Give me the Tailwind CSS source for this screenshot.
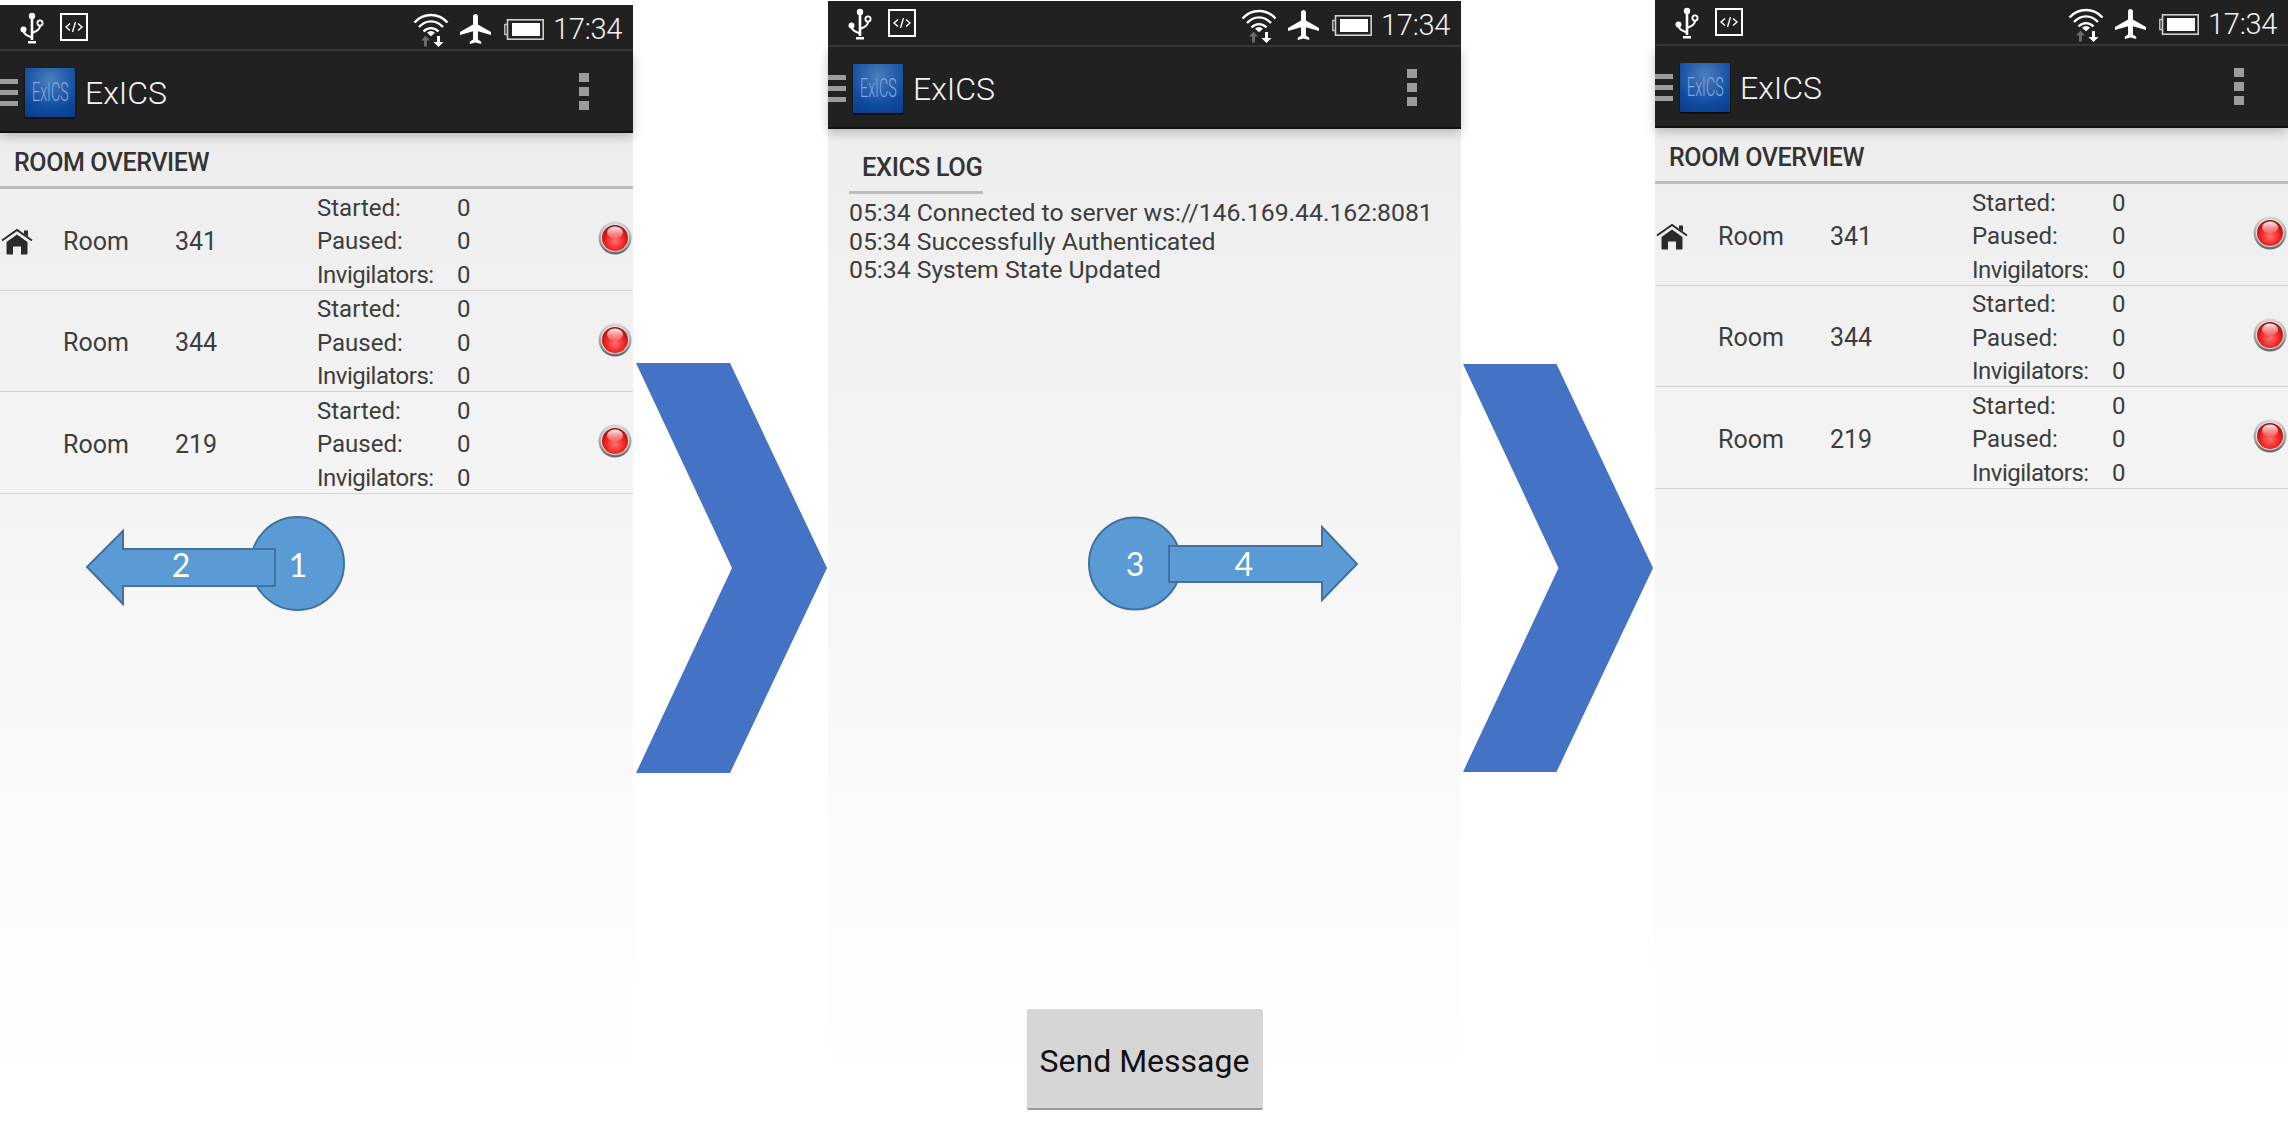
<!DOCTYPE html>
<html lang="en">
<head>
<meta charset="utf-8">
<title>ExICS</title>
<script src="https://cdn.jsdelivr.net/npm/@tailwindcss/browser@4"></script>
</head>
<body class="bg-white">
<svg class="absolute h-0 w-0" xmlns="http://www.w3.org/2000/svg">
  <defs>
    <radialGradient id="ledRed" cx="50%" cy="62%" r="62%">
      <stop offset="0%" stop-color="#ff7272"/><stop offset="60%" stop-color="#f02020"/><stop offset="100%" stop-color="#9c0f0f"/>
    </radialGradient>
    <linearGradient id="ledRing" x1="0" y1="0" x2="0" y2="1">
      <stop offset="0%" stop-color="#d8d8d8"/><stop offset="60%" stop-color="#a0a0a0"/><stop offset="100%" stop-color="#666"/>
    </linearGradient>
    <linearGradient id="ledShine" x1="0" y1="0" x2="0" y2="1">
      <stop offset="0%" stop-color="#fff" stop-opacity=".95"/><stop offset="100%" stop-color="#fff" stop-opacity=".1"/>
    </linearGradient>
    <symbol id="led" viewBox="0 0 34 34">
      <circle cx="17" cy="17" r="16.5" fill="url(#ledRing)"/>
      <circle cx="17" cy="17" r="14" fill="#e4e4e4"/>
      <circle cx="17" cy="17" r="13" fill="url(#ledRed)"/>
      <ellipse cx="17" cy="11.5" rx="8" ry="6" fill="url(#ledShine)"/>
    </symbol>
    <symbol id="house" viewBox="0 0 32 27">
      <path d="M1 12.5 16 2l15 10.5" fill="none" stroke="#2b2b2b" stroke-width="2"/>
      <path d="M23 2.5h4v6l-4-2.800z" fill="#2b2b2b"/>
      <path d="M5.500 14 16 6.500 26.500 14v11.500a1 1 0 0 1-1 1H20V18.500h-8v8H6.500a1 1 0 0 1-1-1z" fill="#2b2b2b"/>
    </symbol>
    <symbol id="usb" viewBox="0 0 26 32">
      <circle cx="12" cy="4" r="3.200" fill="#fff"/>
      <path d="M12 4v24" stroke="#fff" stroke-width="2.600"/>
      <path d="M8 29h8v2.500H8z" fill="#fff"/>
      <circle cx="3.500" cy="17.500" r="3" fill="#fff"/>
      <path d="M3.500 18c0 4 3 5.500 8.500 7.500" fill="none" stroke="#fff" stroke-width="2.200"/>
      <circle cx="20" cy="11" r="2.600" fill="none" stroke="#fff" stroke-width="1.800"/>
      <path d="M20 13.500c0 4-3 5.500-8 7.500" fill="none" stroke="#fff" stroke-width="2.200"/>
    </symbol>
    <symbol id="code" viewBox="0 0 28 28">
      <rect x="1" y="1" width="26" height="26" fill="none" stroke="#fff" stroke-width="2"/>
      <path d="M10 10.500 6 14l4 3.500M18 10.500l4 3.500-4 3.500M15.500 9l-3 10" fill="none" stroke="#fff" stroke-width="1.400"/>
    </symbol>
    <symbol id="wifi" viewBox="0 0 36 35">
      <path d="M1.500 10.500C10.500 .5 25.500 .5 34.500 10.500" fill="none" stroke="#fff" stroke-width="2.400"/>
      <path d="M6 15c7-7.500 17-7.500 24 0" fill="none" stroke="#fff" stroke-width="2.400"/>
      <path d="M10.500 19.500c4.500-4.500 10.500-4.500 15 0" fill="none" stroke="#fff" stroke-width="2.400"/>
      <path d="M18 19a6 6 0 0 0-4 1.800l4 3.500 4-3.500a6 6 0 0 0-4-1.800z" fill="#fff"/>
      <path d="M12.500 23.500 8 28.500h3V34.500h3V28.500h3z" fill="#6a6a6a"/>
      <path d="M24 24v6h-3.500l5 5 5-5H27v-6z" fill="#fff"/>
    </symbol>
    <symbol id="plane" viewBox="2 2 19 20" preserveAspectRatio="none">
      <path d="M21 16v-2l-8-5V3.500c0-.83-.67-1.500-1.500-1.500S10 2.670 10 3.500V9l-8 5v2l8-2.500V19l-2 1.500V22l3.500-1 3.500 1v-1.500L13 19v-5.500l8 2.500z" fill="#fff"/>
    </symbol>
    <symbol id="battery" viewBox="0 0 40 21">
      <path d="M3.500 5.500H.8v10h2.700" fill="none" stroke="#bdbdbd" stroke-width="1.500"/>
      <rect x="3.500" y=".8" width="35.700" height="19.400" fill="none" stroke="#cfcfcf" stroke-width="1.600"/>
      <rect x="8" y="4" width="28" height="13" fill="#fff"/>
    </symbol>
  </defs>
</svg>

<div class="flex h-[1130px] w-[2288px] overflow-hidden font-[Roboto,sans-serif]">

  <!-- Phone 1 -->
  <section class="relative mt-[5px] flex w-[633px] shrink-0 flex-col bg-linear-to-b from-[#ebebeb] to-white to-95%">
    <div class="flex h-[44px] items-center bg-[#212121] text-white">
      <svg class="ml-[20px] mt-[2px] h-[32px] w-[26px]"><use href="#usb"/></svg>
      <svg class="ml-[14px] mt-[-1px] h-[28px] w-[28px]"><use href="#code"/></svg>
      <svg class="ml-auto mt-[4px] h-[35px] w-[36px]"><use href="#wifi"/></svg>
      <svg class="ml-[11px] mt-[4px] h-[30px] w-[31px]"><use href="#plane"/></svg>
      <svg class="ml-[13px] mt-[4px] h-[21px] w-[40px]"><use href="#battery"/></svg>
      <span class="ml-[9px] mr-[11px] mt-[4px] text-[29px] font-light leading-none tracking-[-0.3px] text-[#f2f2f2]">17:34</span>
    </div>
    <div class="h-[2px] bg-[#383838]"></div>
    <div class="relative z-10 flex h-[82px] items-center border-b-2 border-[#111] bg-[#212121] shadow-[0_4px_10px_rgba(0,0,0,0.22)]">
      <div class="mt-[2px] flex w-[18px] flex-col gap-[6px]"><i class="h-[5px] bg-[#9c9c9c]"></i><i class="h-[5px] bg-[#9c9c9c]"></i><i class="h-[5px] bg-[#9c9c9c]"></i></div>
      <div class="ml-[7px] mt-[2px] flex h-[49px] w-[50px] items-center justify-center overflow-hidden rounded-[1px] bg-[radial-gradient(circle_at_50%_25%,#4c7dbf,#0f4ba0_65%,#0b3d8a)] shadow-[0_1px_2px_#000]"><span class="scale-x-55 text-[26px] font-light text-[#86a9dc]">ExICS</span></div>
      <span class="ml-[10px] mt-[3px] text-[32px] font-light text-[#f2f2f2]">ExICS</span>
      <div class="ml-auto mr-[44px] flex w-[10px] flex-col gap-[5px]"><i class="h-[9px] bg-[#9c9c9c]"></i><i class="h-[9px] bg-[#9c9c9c]"></i><i class="h-[9px] bg-[#9c9c9c]"></i></div>
    </div>
    <h2 class="flex h-[56px] items-center border-b-[3px] border-[#bcbcbc] pl-[14px] pt-[6px] text-[25px] font-medium tracking-[-0.4px] text-[#333]">ROOM OVERVIEW</h2>
    <div class="text-[25px] text-[#3d3d3d]">
      <div class="flex h-[101.5px] items-center border-b border-[#d4d4d4] pt-[4px]">
        <svg class="ml-px mr-[30px] h-[27px] w-[32px]"><use href="#house"/></svg>
        <span class="w-[112px]">Room</span><span class="w-[142px]">341</span>
        <div class="mt-[1px] grid grid-cols-[140px_auto] text-[24px] leading-[33.5px]"><span>Started:</span><span>0</span><span>Paused:</span><span>0</span><span class="tracking-[-0.5px]">Invigilators:</span><span>0</span></div>
        <svg class="mb-[6px] ml-auto mr-px h-[34px] w-[34px]"><use href="#led"/></svg>
      </div>
      <div class="flex h-[101.5px] items-center border-b border-[#d4d4d4] pt-[4px]">
        <span class="ml-[63px] w-[112px]">Room</span><span class="w-[142px]">344</span>
        <div class="mt-[1px] grid grid-cols-[140px_auto] text-[24px] leading-[33.5px]"><span>Started:</span><span>0</span><span>Paused:</span><span>0</span><span class="tracking-[-0.5px]">Invigilators:</span><span>0</span></div>
        <svg class="mb-[6px] ml-auto mr-px h-[34px] w-[34px]"><use href="#led"/></svg>
      </div>
      <div class="flex h-[101.5px] items-center border-b border-[#d4d4d4] pt-[4px]">
        <span class="ml-[63px] w-[112px]">Room</span><span class="w-[142px]">219</span>
        <div class="mt-[1px] grid grid-cols-[140px_auto] text-[24px] leading-[33.5px]"><span>Started:</span><span>0</span><span>Paused:</span><span>0</span><span class="tracking-[-0.5px]">Invigilators:</span><span>0</span></div>
        <svg class="mb-[6px] ml-auto mr-px h-[34px] w-[34px]"><use href="#led"/></svg>
      </div>
    </div>
    <svg class="absolute left-[80px] top-[505px] h-[110px] w-[275px]" viewBox="80 510 275 110">
      <circle cx="297.500" cy="563.500" r="46.500" fill="#5b9bd5" stroke="#41719c" stroke-width="2"/>
      <path d="M87 567 123 531V549H275V586H123V604z" fill="#5b9bd5" stroke="#41719c" stroke-width="2"/>
      <text x="181" y="577" text-anchor="middle" fill="#fff" font-family="Lato" font-size="32">2</text>
      <text x="298" y="577" text-anchor="middle" fill="#fff" font-family="Lato" font-size="32">1</text>
    </svg>
  </section>

  <div class="w-[195px] shrink-0 pt-[363px]">
    <svg class="ml-[3px] h-[410px] w-[191px]" viewBox="0 0 191 410"><path d="M0 0H94L191 205 94 410H0L96 205z" fill="#4472c4"/></svg>
  </div>

  <!-- Phone 2 -->
  <section class="relative mt-px flex w-[633px] shrink-0 flex-col bg-linear-to-b from-[#ebebeb] to-white to-95%">
    <div class="flex h-[44px] items-center bg-[#212121] text-white">
      <svg class="ml-[20px] mt-[2px] h-[32px] w-[26px]"><use href="#usb"/></svg>
      <svg class="ml-[14px] mt-[-1px] h-[28px] w-[28px]"><use href="#code"/></svg>
      <svg class="ml-auto mt-[4px] h-[35px] w-[36px]"><use href="#wifi"/></svg>
      <svg class="ml-[11px] mt-[4px] h-[30px] w-[31px]"><use href="#plane"/></svg>
      <svg class="ml-[13px] mt-[4px] h-[21px] w-[40px]"><use href="#battery"/></svg>
      <span class="ml-[9px] mr-[11px] mt-[4px] text-[29px] font-light leading-none tracking-[-0.3px] text-[#f2f2f2]">17:34</span>
    </div>
    <div class="h-[2px] bg-[#383838]"></div>
    <div class="relative z-10 flex h-[82px] items-center border-b-2 border-[#111] bg-[#212121] shadow-[0_4px_10px_rgba(0,0,0,0.22)]">
      <div class="mt-[2px] flex w-[18px] flex-col gap-[6px]"><i class="h-[5px] bg-[#9c9c9c]"></i><i class="h-[5px] bg-[#9c9c9c]"></i><i class="h-[5px] bg-[#9c9c9c]"></i></div>
      <div class="ml-[7px] mt-[2px] flex h-[49px] w-[50px] items-center justify-center overflow-hidden rounded-[1px] bg-[radial-gradient(circle_at_50%_25%,#4c7dbf,#0f4ba0_65%,#0b3d8a)] shadow-[0_1px_2px_#000]"><span class="scale-x-55 text-[26px] font-light text-[#86a9dc]">ExICS</span></div>
      <span class="ml-[10px] mt-[3px] text-[32px] font-light text-[#f2f2f2]">ExICS</span>
      <div class="ml-auto mr-[44px] flex w-[10px] flex-col gap-[5px]"><i class="h-[9px] bg-[#9c9c9c]"></i><i class="h-[9px] bg-[#9c9c9c]"></i><i class="h-[9px] bg-[#9c9c9c]"></i></div>
    </div>
    <div class="flex-1 pl-[21px] pt-[20px]">
      <h2 class="w-[134px] border-b-[3px] border-[#bcbcbc] pb-[6px] pl-[13px] text-[25.5px] font-medium leading-[36px] tracking-[-0.4px] text-[#333]">EXICS LOG</h2>
      <div class="mt-[5px] text-[24.8px] leading-[28.700px] tracking-[-0.03px] text-[#3d3d3d]">
        <p>05:34 Connected to server ws://146.169.44.162:8081</p>
        <p>05:34 Successfully Authenticated</p>
        <p>05:34 System State Updated</p>
      </div>
    </div>
    <button class="mx-auto mb-[20px] flex h-[101px] w-[236px] items-center justify-center rounded-[2px] border-b-2 border-[#9a9a9a] bg-[#d6d6d6] pt-[4px] text-[32px] text-[#111]">Send Message</button>
    <svg class="absolute left-[260px] top-[505px] h-[110px] w-[275px]" viewBox="1088 506 275 110">
      <circle cx="1135" cy="563.500" r="46" fill="#5b9bd5" stroke="#41719c" stroke-width="2"/>
      <path d="M1357 564 1322 527V546H1169V582H1322V600z" fill="#5b9bd5" stroke="#41719c" stroke-width="2"/>
      <text x="1135" y="576" text-anchor="middle" fill="#fff" font-family="Lato" font-size="32">3</text>
      <text x="1244" y="576" text-anchor="middle" fill="#fff" font-family="Lato" font-size="32">4</text>
    </svg>
  </section>

  <div class="w-[194px] shrink-0 pt-[363px]">
    <svg class="ml-[2px] h-[410px] w-[190px]" viewBox="0 0 191 410"><path d="M0 0H94L191 205 94 410H0L96 205z" fill="#4472c4"/></svg>
  </div>

  <!-- Phone 3 -->
  <section class="flex w-[633px] shrink-0 flex-col bg-linear-to-b from-[#ebebeb] to-white to-95%">
    <div class="flex h-[44px] items-center bg-[#212121] text-white">
      <svg class="ml-[20px] mt-[2px] h-[32px] w-[26px]"><use href="#usb"/></svg>
      <svg class="ml-[14px] mt-[-1px] h-[28px] w-[28px]"><use href="#code"/></svg>
      <svg class="ml-auto mt-[4px] h-[35px] w-[36px]"><use href="#wifi"/></svg>
      <svg class="ml-[11px] mt-[4px] h-[30px] w-[31px]"><use href="#plane"/></svg>
      <svg class="ml-[13px] mt-[4px] h-[21px] w-[40px]"><use href="#battery"/></svg>
      <span class="ml-[9px] mr-[11px] mt-[4px] text-[29px] font-light leading-none tracking-[-0.3px] text-[#f2f2f2]">17:34</span>
    </div>
    <div class="h-[2px] bg-[#383838]"></div>
    <div class="relative z-10 flex h-[82px] items-center border-b-2 border-[#111] bg-[#212121] shadow-[0_4px_10px_rgba(0,0,0,0.22)]">
      <div class="mt-[2px] flex w-[18px] flex-col gap-[6px]"><i class="h-[5px] bg-[#9c9c9c]"></i><i class="h-[5px] bg-[#9c9c9c]"></i><i class="h-[5px] bg-[#9c9c9c]"></i></div>
      <div class="ml-[7px] mt-[2px] flex h-[49px] w-[50px] items-center justify-center overflow-hidden rounded-[1px] bg-[radial-gradient(circle_at_50%_25%,#4c7dbf,#0f4ba0_65%,#0b3d8a)] shadow-[0_1px_2px_#000]"><span class="scale-x-55 text-[26px] font-light text-[#86a9dc]">ExICS</span></div>
      <span class="ml-[10px] mt-[3px] text-[32px] font-light text-[#f2f2f2]">ExICS</span>
      <div class="ml-auto mr-[44px] flex w-[10px] flex-col gap-[5px]"><i class="h-[9px] bg-[#9c9c9c]"></i><i class="h-[9px] bg-[#9c9c9c]"></i><i class="h-[9px] bg-[#9c9c9c]"></i></div>
    </div>
    <h2 class="flex h-[56px] items-center border-b-[3px] border-[#bcbcbc] pl-[14px] pt-[6px] text-[25px] font-medium tracking-[-0.4px] text-[#333]">ROOM OVERVIEW</h2>
    <div class="text-[25px] text-[#3d3d3d]">
      <div class="flex h-[101.5px] items-center border-b border-[#d4d4d4] pt-[4px]">
        <svg class="ml-px mr-[30px] h-[27px] w-[32px]"><use href="#house"/></svg>
        <span class="w-[112px]">Room</span><span class="w-[142px]">341</span>
        <div class="mt-[1px] grid grid-cols-[140px_auto] text-[24px] leading-[33.5px]"><span>Started:</span><span>0</span><span>Paused:</span><span>0</span><span class="tracking-[-0.5px]">Invigilators:</span><span>0</span></div>
        <svg class="mb-[6px] ml-auto mr-px h-[34px] w-[34px]"><use href="#led"/></svg>
      </div>
      <div class="flex h-[101.5px] items-center border-b border-[#d4d4d4] pt-[4px]">
        <span class="ml-[63px] w-[112px]">Room</span><span class="w-[142px]">344</span>
        <div class="mt-[1px] grid grid-cols-[140px_auto] text-[24px] leading-[33.5px]"><span>Started:</span><span>0</span><span>Paused:</span><span>0</span><span class="tracking-[-0.5px]">Invigilators:</span><span>0</span></div>
        <svg class="mb-[6px] ml-auto mr-px h-[34px] w-[34px]"><use href="#led"/></svg>
      </div>
      <div class="flex h-[101.5px] items-center border-b border-[#d4d4d4] pt-[4px]">
        <span class="ml-[63px] w-[112px]">Room</span><span class="w-[142px]">219</span>
        <div class="mt-[1px] grid grid-cols-[140px_auto] text-[24px] leading-[33.5px]"><span>Started:</span><span>0</span><span>Paused:</span><span>0</span><span class="tracking-[-0.5px]">Invigilators:</span><span>0</span></div>
        <svg class="mb-[6px] ml-auto mr-px h-[34px] w-[34px]"><use href="#led"/></svg>
      </div>
    </div>
  </section>
</div>
</body>
</html>
